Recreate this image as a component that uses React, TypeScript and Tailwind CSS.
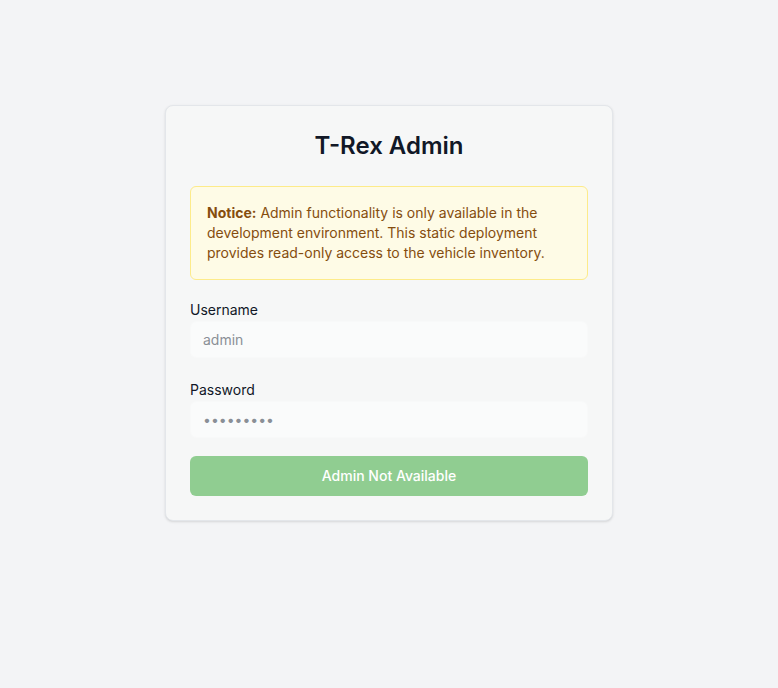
import React from 'react';

const App = () => {
  return (
    <div className="min-h-screen bg-[#f3f4f6] pt-[105px] font-['Inter',sans-serif]">
      <div className="mx-auto w-[448px] rounded-lg border border-[#e3e6ea] bg-[#f6f7f7] p-6 shadow-sm">
        <h1 className="text-center text-2xl font-semibold text-[#111827]">T-Rex Admin</h1>

        <p className="mt-6 rounded-md border border-[#fdeb8a] bg-[#fefbe6] p-4 text-sm leading-5 text-[#854d0e]">
          <strong className="font-bold">Notice:</strong> Admin functionality is only available in the development
          environment. This static deployment provides read-only access to the vehicle inventory.
        </p>

        <form className="mt-5">
          <label className="block text-sm leading-5 font-normal text-[#111827]">Username</label>
          <input
            type="text"
            placeholder="admin"
            disabled
            className="mt-[1px] block h-[37px] w-full rounded-md border border-[#f8f9f9] bg-[#fafbfb] px-3 text-sm text-[#6b7280] placeholder:text-[#8a8f96] outline-none"
          />

          <label className="mt-[22px] block text-sm leading-5 font-normal text-[#111827]">Password</label>
          <input
            type="password"
            defaultValue="password1"
            disabled
            className="mt-[1px] block h-[37px] w-full rounded-md border border-[#f8f9f9] bg-[#fafbfb] px-3 text-sm text-[#8a8f96] outline-none"
          />

          <button
            type="button"
            disabled
            className="mt-[18px] h-10 w-full rounded-md bg-[#90cd91] text-sm font-medium text-white"
          >
            Admin Not Available
          </button>
        </form>
      </div>
    </div>
  );
};

export default App;
